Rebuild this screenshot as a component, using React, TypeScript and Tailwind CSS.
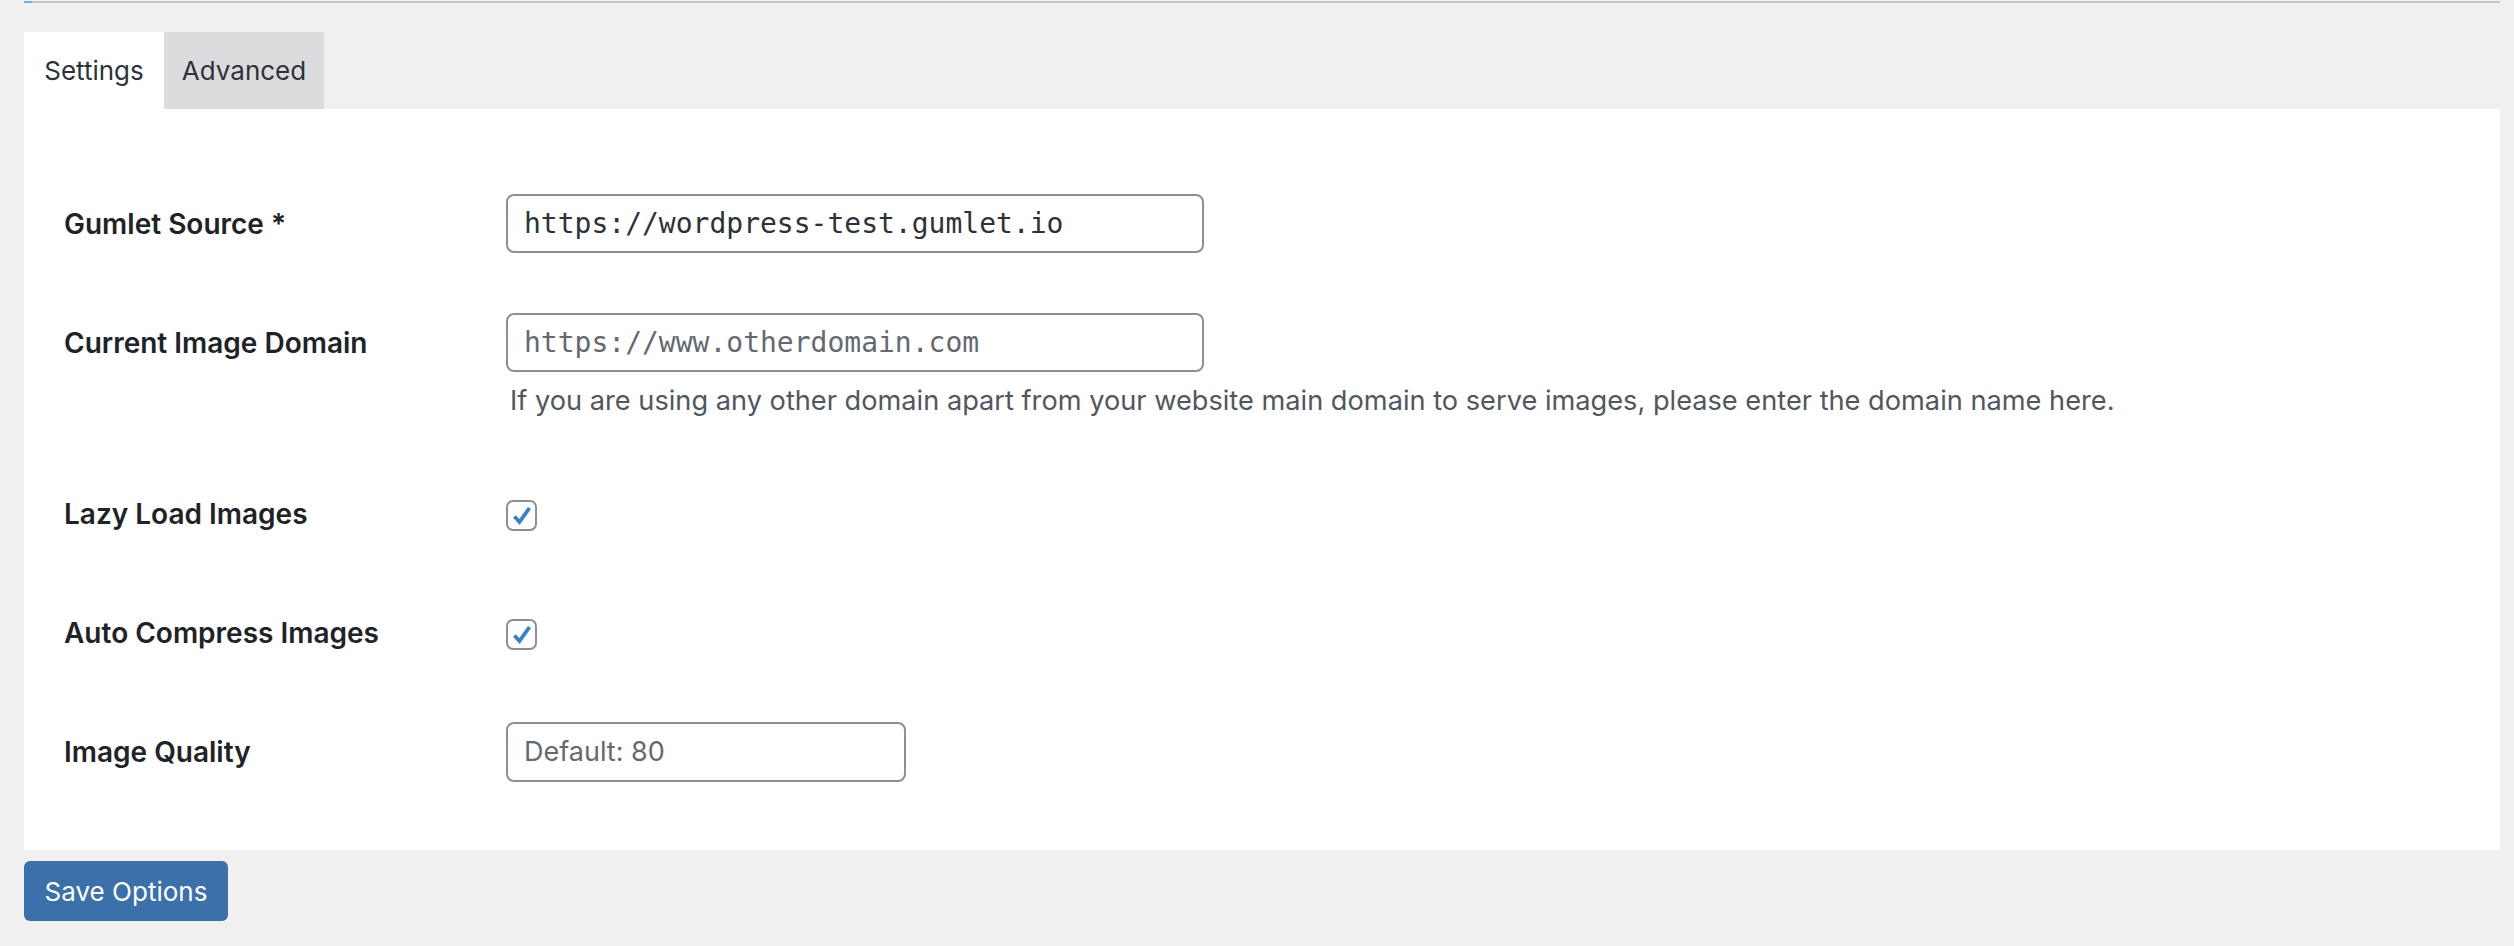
import { useState } from "react"

const sans = "font-['Inter','Liberation_Sans',sans-serif]"
const mono = "font-['DejaVu_Sans_Mono','Liberation_Mono',monospace]"

function CheckBox({ checked, onToggle }: { checked: boolean; onToggle: () => void }) {
    return (
        <button
            type="button"
            onClick={onToggle}
            className="w-[31px] h-[31px] mt-[4px] rounded-[7px] border-2 border-[#8c8f94] bg-white flex items-center justify-center"
        >
            {checked && (
                <svg width="22" height="22" viewBox="0 0 22 22">
                    <path d="M3.5 11.5l5 5.5L18.5 3" fill="none" stroke="#3582c4" strokeWidth="3.8" strokeLinejoin="miter" />
                </svg>
            )}
        </button>
    )
}

function Row({ label, children, extra }: { label: string; children: React.ReactNode; extra?: React.ReactNode }) {
    return (
        <div className={`pt-[30px] ${extra ? "pb-[35px]" : "pb-[30px]"}`}>
            <div className="flex h-[59px] items-center">
                <div className={`w-[442px] shrink-0 text-[28px] font-semibold text-[#1d2327] ${sans}`}>{label}</div>
                <div className="flex items-center">{children}</div>
            </div>
            {extra}
        </div>
    )
}

export default function App() {
    const [tab, setTab] = useState("settings")
    const [lazy, setLazy] = useState(true)
    const [compress, setCompress] = useState(true)
    const [source, setSource] = useState("https://wordpress-test.gumlet.io")

    return (
        <div className={`min-h-screen w-full bg-[#f0f0f1] pl-[24px] pr-[14px] ${sans}`}>
            <div className="pt-[1px]">
                <div className="h-[2px] bg-[#c3c4c7] border-l-[8px] border-[#72aee6]" />
            </div>

            <div className="flex mt-[29px]">
                <button
                    onClick={() => setTab("settings")}
                    className={`h-[77px] w-[140px] text-[26px] text-[#2c3338] ${tab === "settings" ? "bg-white" : "bg-[#dcdcde]"}`}
                >
                    Settings
                </button>
                <button
                    onClick={() => setTab("advanced")}
                    className={`h-[77px] w-[160px] text-[26px] text-[#2c3338] ${tab === "advanced" ? "bg-white" : "bg-[#dcdcde]"}`}
                >
                    Advanced
                </button>
            </div>

            <div className="bg-white pl-[40px] pt-[55px] pb-[39px]">
                <Row label="Gumlet Source *">
                    <input
                        value={source}
                        onChange={e => setSource(e.target.value)}
                        className={`w-[698px] h-[59px] rounded-[8px] border-2 border-[#8c8f94] px-[16px] text-[28px] text-[#2c3338] outline-none ${mono}`}
                    />
                </Row>
                <Row
                    label="Current Image Domain"
                    extra={
                        <p className="ml-[446px] mt-[11px] leading-[36px] text-[27.2px] text-[#50575e]">
                            If you are using any other domain apart from your website main domain to serve images, please enter the domain name here.
                        </p>
                    }
                >
                    <input
                        placeholder="https://www.otherdomain.com"
                        className={`w-[698px] h-[59px] rounded-[8px] border-2 border-[#8c8f94] px-[16px] text-[28px] text-[#2c3338] placeholder:text-[#646970] outline-none ${mono}`}
                    />
                </Row>
                <Row label="Lazy Load Images">
                    <CheckBox checked={lazy} onToggle={() => setLazy(!lazy)} />
                </Row>
                <Row label="Auto Compress Images">
                    <CheckBox checked={compress} onToggle={() => setCompress(!compress)} />
                </Row>
                <Row label="Image Quality">
                    <input
                        placeholder="Default: 80"
                        className="w-[400px] h-[60px] rounded-[8px] border-2 border-[#8c8f94] px-[16px] text-[27px] text-[#2c3338] placeholder:text-[#646970] outline-none"
                    />
                </Row>
            </div>

            <button className="mt-[11px] h-[60px] w-[204px] rounded-[6px] bg-[#3b70aa] text-[26px] text-white">
                Save Options
            </button>
        </div>
    )
}
